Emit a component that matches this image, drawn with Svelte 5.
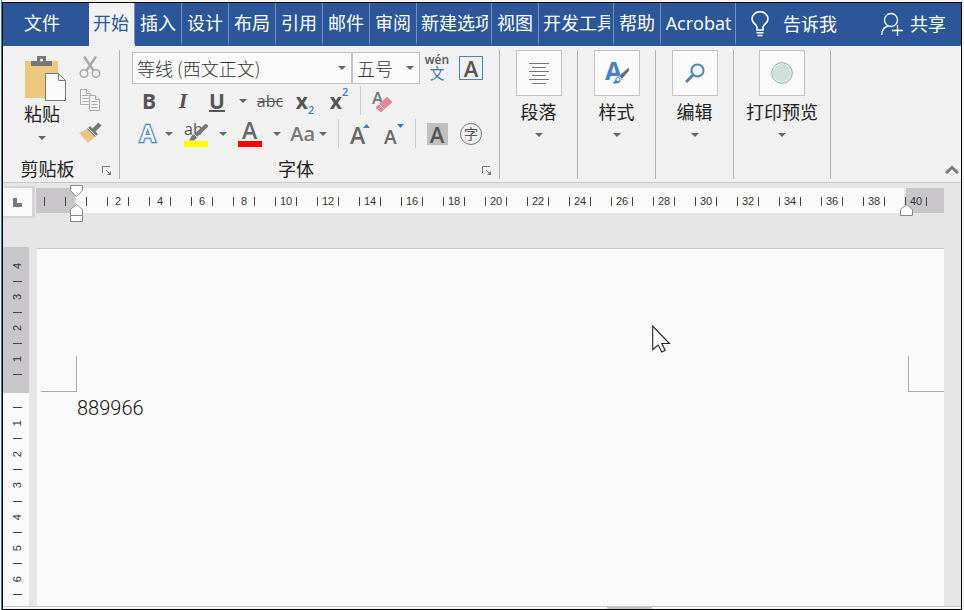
<script>
  const tabs = [
    { name: '插入' },
    { name: '设计' },
    { name: '布局' },
    { name: '引用' },
    { name: '邮件' },
    { name: '审阅' },
    { name: '新建选项', clipped: true },
    { name: '视图' },
    { name: '开发工具', clipped: true },
    { name: '帮助' },
    { name: 'Acrobat', clipped: true }
  ];

  // ruler numbers, null is the zero mark
  const columns = [null];
  for (let n = 2; n <= 40; n += 2) columns.push(n);

  const marginRows = [4, 3, 2, 1];
  const bodyRows = [1, 2, 3, 4, 5, 6];

  let fontName = '等线 (西文正文)';
  let fontSize = '五号';
</script>

{#snippet caret()}
  <svg class="caret" width="8" height="4" viewBox="0 0 8 4"><path d="M0 0h8L4 4z" fill="#666" /></svg>
{/snippet}

{#snippet launcher()}
  <svg width="10" height="10" viewBox="0 0 10 10" fill="none" stroke="#777">
    <path d="M.5 7V.5H8M4 4l4 4" />
    <path d="M9 5v4H5z" fill="#777" stroke="none" />
  </svg>
{/snippet}

<div class="frame">
  <div class="window">
    <nav class="tabs">
      <button class="tab file">文件</button>
      <button class="tab active">开始</button>
      {#each tabs as tab}
        <button class="tab" class:clipped={tab.clipped}><span>{tab.name}</span></button>
      {/each}
      <button class="tell">
        <svg width="18" height="26" viewBox="0 0 18 26" fill="none" stroke="#fff" stroke-width="1.6">
          <path d="M6 19v-3C5 13 1 12 1 8a8 7.300 0 0 1 16 0c0 4-4 5-5 8v3zM5.500 21.700h7M6.500 24.500h5" />
        </svg>
        <span>告诉我</span>
      </button>
      <button class="share">
        <svg width="22" height="24" viewBox="0 0 22 24" fill="none" stroke="#fff" stroke-width="1.300">
          <circle cx="10" cy="8" r="6.500" />
          <path d="M.7 23c.3-5 3-8.500 7-9M11 18.500h11M16.500 13v11" />
        </svg>
        <span>共享</span>
      </button>
    </nav>

    <div class="ribbon">
      <section class="group">
        <div class="clipboard">
          <button class="paste">
            <svg width="48" height="50" viewBox="0 0 48 50">
              <path d="M7 9h33v37H7z" fill="#edc87e" />
              <path d="M13 14V9h6V4h9v5h6v5z" fill="#777" />
              <circle cx="23.500" cy="8" r="1.500" fill="#f1f1f1" />
              <path d="M27.500 21.500h13l7 7v20h-20z" fill="#fafafa" stroke="#777" />
              <path d="M40.500 21.500v7h7" fill="none" stroke="#777" />
            </svg>
            <span>粘贴</span>
            {@render caret()}
          </button>
          <div class="side">
            <button aria-label="剪切">
              <svg width="22" height="24" viewBox="0 0 22 24" fill="none" stroke="#aaa">
                <path d="M5 1.500l9.500 14M17 1.500l-9.500 14" stroke-width="2.500" />
                <circle cx="5" cy="18.500" r="3.800" stroke-width="1.600" />
                <circle cx="17" cy="18.500" r="3.800" stroke-width="1.600" />
              </svg>
            </button>
            <button aria-label="复制">
              <svg width="22" height="24" viewBox="0 0 22 24" fill="#f4f4f4" stroke="#aaa">
                <path d="M1.500 1.500h6l4 4v11h-10z" />
                <path d="M7.500 1.500v4h4M3.500 7.500h6M3.500 10.500h6M3.500 13.500h6" />
                <path d="M10.500 7.500h6l4 4v11h-10z" />
                <path d="M16.500 7.500v4h4M12.500 13.500h6M12.500 16.500h6M12.500 19.500h6" />
              </svg>
            </button>
            <button aria-label="格式刷">
              <svg width="24" height="22" viewBox="0 0 24 22">
                <path d="M1 11l8-4 8 8-7 6z" fill="#edc38a" />
                <path d="M9 7l3-3 8 8-3 3z" fill="#777" />
                <path d="M14 10l8-8" stroke="#777" stroke-width="4.500" />
                <path d="M10 6l8 8" stroke="#f1f1f1" />
              </svg>
            </button>
          </div>
        </div>
        <footer>
          <span>剪贴板</span>
          <button aria-label="剪贴板选项">{@render launcher()}</button>
        </footer>
      </section>

      <section class="group">
        <div class="font">
          <div class="row pickers">
            <div class="picker name">
              <select aria-label="字体" bind:value={fontName}>
                <option>等线 (西文正文)</option>
                <option>宋体</option>
              </select>
              {@render caret()}
            </div>
            <div class="picker size">
              <select aria-label="字号" bind:value={fontSize}>
                <option>五号</option>
                <option>小四</option>
              </select>
              {@render caret()}
            </div>
            <button class="tool pinyin"><small>wén</small><span>文</span></button>
            <button class="tool"><span class="boxed">A</span></button>
          </div>
          <div class="row">
            <button class="tool bold">B</button>
            <button class="tool italic">I</button>
            <button class="tool underline">U</button>
            <button class="drop wide" aria-label="下划线样式">{@render caret()}</button>
            <button class="tool strike">abc</button>
            <button class="tool script">x<sub>2</sub></button>
            <button class="tool script">x<sup>2</sup></button>
            <i class="line"></i>
            <button class="tool" aria-label="清除格式">
              <svg width="22" height="24" viewBox="0 0 22 24">
                <text x="1" y="15" font-size="17" font-weight="600" fill="#777">A</text>
                <path d="M5 18L15 8.500q1-1 2 0l3.500 3.500q1 1 0 2L11 22.500q-1 1-2 0L5 19.500z" fill="#e8879c" />
                <path d="M8 15l6 6" stroke="#f1f1f1" />
              </svg>
            </button>
          </div>
          <div class="row">
            <button class="tool effect">
              <svg width="24" height="26" viewBox="0 0 24 26">
                <text x="4" y="21" font-size="23" font-weight="600" fill="#fff" stroke="#c5daf0" stroke-width="4">A</text>
                <text x="4" y="21" font-size="23" font-weight="600" fill="#fff" stroke="#3b7abf" stroke-width="2" paint-order="stroke">A</text>
              </svg>
            </button>
            <button class="drop" aria-label="文本效果">{@render caret()}</button>
            <button class="tool colour">
              <svg width="24" height="26" viewBox="0 0 24 26">
                <text x="0" y="14" font-size="16" fill="#555">ab</text>
                <path d="M0 20h24v6H0z" fill="#ff0" />
                <path d="M22 5L10 16" stroke="#777" stroke-width="4" stroke-linecap="round" />
                <path d="M9 13l4 4-3 2.500H5z" fill="#777" />
                <path d="M9.500 12.500l4 4" stroke="#f1f1f1" />
              </svg>
            </button>
            <button class="drop" aria-label="突出显示颜色">{@render caret()}</button>
            <button class="tool colour">
              <svg width="24" height="26" viewBox="0 0 24 26">
                <text x="4" y="18" font-size="23" font-weight="600" fill="#666">A</text>
                <path d="M0 20h24v6H0z" fill="#f00" />
              </svg>
            </button>
            <button class="drop" aria-label="字体颜色">{@render caret()}</button>
            <button class="tool case">Aa {@render caret()}</button>
            <i class="line after"></i>
            <button class="tool">
              <svg width="22" height="26" viewBox="0 0 22 26">
                <text x="1" y="23" font-size="23" font-weight="600" fill="#666">A</text>
                <path d="M14 7h7l-3.500-4z" fill="#3b7abf" />
              </svg>
            </button>
            <button class="tool">
              <svg width="22" height="26" viewBox="0 0 22 26">
                <text x="1" y="23" font-size="19" font-weight="600" fill="#666">A</text>
                <path d="M14 3h7l-3.500 4z" fill="#3b7abf" />
              </svg>
            </button>
            <i class="line"></i>
            <button class="tool"><span class="shaded">A</span></button>
            <button class="tool"><span class="circled">字</span></button>
          </div>
        </div>
        <footer>
          <span>字体</span>
          <button aria-label="字体选项">{@render launcher()}</button>
        </footer>
      </section>

      <section class="group">
        <button class="big">
          <span class="tile">
            <svg width="22" height="22" viewBox="0 0 22 22" stroke="#777">
              <path d="M1 1.500h20M4 5.500h14M1 9.500h20M4 13.500h14M1 17.500h20M4 21.500h14" />
            </svg>
          </span>
          <span>段落</span>
          {@render caret()}
        </button>
      </section>
      <section class="group">
        <button class="big">
          <span class="tile">
            <svg width="24" height="24" viewBox="0 0 24 24">
              <text x="0" y="19" font-size="25" font-weight="700" fill="#4a82bd">A</text>
              <path d="M24 6v4l-7 8-3-3z" fill="#666" stroke="#fafafa" stroke-width=".5" />
              <path d="M6 22q4-1 4-4c1-3 6-3 6 1 0 4-6 5-10 3z" fill="#4a82bd" stroke="#fafafa" />
              <circle cx="13" cy="18.500" r="1.500" fill="#fafafa" />
            </svg>
          </span>
          <span>样式</span>
          {@render caret()}
        </button>
      </section>
      <section class="group">
        <button class="big">
          <span class="tile">
            <svg width="20" height="20" viewBox="0 0 20 20" fill="none" stroke="#4a82bd">
              <circle cx="12.500" cy="7.500" r="6" stroke-width="2" />
              <path d="M8 12l-7 7" stroke-width="3" />
            </svg>
          </span>
          <span>编辑</span>
          {@render caret()}
        </button>
      </section>
      <section class="group">
        <button class="big">
          <span class="tile">
            <svg width="22" height="22" viewBox="0 0 22 22">
              <circle cx="11" cy="11" r="10.300" fill="#fafafa" stroke="#7fae9b" />
              <circle cx="11" cy="11" r="9" fill="#cfe0da" />
            </svg>
          </span>
          <span>打印预览</span>
          {@render caret()}
        </button>
      </section>
      <button class="collapse" aria-label="折叠功能区">
        <svg width="14" height="9" viewBox="0 0 14 9" fill="none" stroke="#777" stroke-width="3">
          <path d="M1 8l6-5.500L13 8" />
        </svg>
      </button>
    </div>

    <div class="rulerbar">
      <button class="tabstop" aria-label="制表符">
        <svg width="9" height="9" viewBox="0 0 9 9"><path d="M0 0h4v5h5v4H0z" fill="#777" /></svg>
      </button>
      <div class="ruler">
        <div class="cell first"><b></b></div>
        {#each columns as n}
          <div class="cell"><b></b><span>{n ?? ''}</span><b></b></div>
        {/each}
        <svg class="indent" width="13" height="37" viewBox="0 0 13 37" fill="#fff" stroke="#888">
          <path d="M.5.500h12v5l-6 6-6-6zM.500 36.500v-12l6-5 6 5v12zM.500 30.500h12" />
        </svg>
        <svg class="indent right" width="13" height="12" viewBox="0 0 13 12" fill="#fff" stroke="#888">
          <path d="M.5 11.500v-6l6-5 6 5v6z" />
        </svg>
      </div>
    </div>

    <div class="workspace">
      <div class="vruler">
        <div class="rows margin">
          {#each marginRows as n}
            <div class="mark"><span>{n}</span><b></b></div>
          {/each}
        </div>
        <div class="rows body">
          <b></b>
          {#each bodyRows as n}
            <div class="mark"><span>{n}</span><b></b></div>
          {/each}
        </div>
      </div>
      <main class="page">
        <div class="corners"><i></i><i></i></div>
        <div class="text" contenteditable="true" role="textbox" aria-label="文档" tabindex="0">889966</div>
        <svg class="pointer" width="19" height="28" viewBox="0 0 19 28">
          <path d="M.7 1v23.500l5.500-4.500 3.500 7 3.500-1.500-3.300-7h7.500z" fill="#fff" stroke="#223" stroke-width="1.100" />
        </svg>
      </main>
    </div>

    <div class="scrollbar"><i></i></div>
  </div>
</div>

<style>
  :global(body) {
    margin: 0;
    background: #f6f6f6;
  }
  .frame {
    box-sizing: border-box;
    min-height: 100vh;
    display: flex;
    padding: 2px 2px 0 0;
    margin-left: 1px;
    border-left: 1px solid #2f7fc1;
    font: 18px/24px "Open Sans", "Noto Sans CJK SC", sans-serif;
    color: #222;
  }
  .window {
    flex: 1;
    min-width: 0;
    display: flex;
    flex-direction: column;
    border: 1px solid #000;
    background: #e6e6e6;
  }
  button {
    padding: 0;
    border: 0;
    background: none;
    font: inherit;
    color: inherit;
    white-space: nowrap;
  }
  svg {
    display: block;
    flex: none;
  }

  .tabs {
    display: flex;
    height: 43px;
    background: #2b579a;
    color: #fff;
  }
  .tab {
    box-sizing: border-box;
    padding: 0 5px 4px;
  }
  .tab:not(.file) {
    border-right: 1px solid #6f94c4;
    border-bottom: 4px solid #2b579a;
    padding-bottom: 0;
  }
  .tab span {
    display: block;
    overflow: hidden;
  }
  .tab.file {
    width: 86px;
    padding-right: 13px;
  }
  .tab.tab.active {
    background: #f1f1f1;
    border-bottom-color: #f1f1f1;
    color: #2b579a;
    padding: 0 5px 0 4px;
  }
  .tab.clipped {
    width: 75px;
    padding: 0 3px 0 4px;
  }
  .tell,
  .share {
    display: flex;
    align-items: center;
    padding-bottom: 2px;
  }
  .tell {
    gap: 14px;
    margin-left: 15px;
  }
  .share {
    gap: 7px;
    margin: 0 15px 0 auto;
  }

  .ribbon {
    display: flex;
    padding: 4px 0 3px;
    border-bottom: 1px solid #c8c8c8;
    background: #f1f1f1;
  }
  .group {
    box-sizing: border-box;
    min-width: 78px;
    min-height: 129px;
    display: flex;
    flex-direction: column;
    border-right: 1px solid #b4b4b4;
  }
  footer {
    display: flex;
    align-items: flex-end;
    margin-top: auto;
    padding-right: 7px;
    line-height: 20px;
  }
  footer span {
    flex: 1;
    padding-right: 10px;
    text-align: center;
  }
  footer button {
    padding-bottom: 3px;
  }
  .clipboard {
    display: flex;
    padding: 0 17px 0 15px;
    gap: 12px;
  }
  .paste {
    display: flex;
    flex-direction: column;
    align-items: center;
    padding-top: 2px;
  }
  .paste .caret {
    margin-top: 10px;
  }
  .side button {
    display: flex;
    align-items: center;
    justify-content: center;
    width: 24px;
    height: 33px;
  }

  .font {
    padding: 0 11px 0 12px;
  }
  .font text {
    font-family: "Open Sans", sans-serif;
  }
  .row {
    display: flex;
    align-items: center;
    height: 33px;
    color: #555;
  }
  .pickers {
    padding-top: 1px;
  }
  .picker {
    box-sizing: border-box;
    display: flex;
    align-items: center;
    height: 32px;
    padding-right: 5px;
    border: 1px solid #c4c4c4;
    background: #fafafa;
  }
  .picker select {
    flex: 1;
    min-width: 0;
    padding: 0 0 0 4px;
    border: 0;
    background: none;
    appearance: none;
    font: 300 18px/24px "Noto Sans CJK SC", sans-serif;
    color: #333;
  }
  .picker.name {
    width: 220px;
  }
  .picker.size {
    width: 68px;
  }
  .tool {
    display: flex;
    align-items: center;
    justify-content: center;
    width: 34px;
    height: 30px;
  }
  .pinyin {
    flex-direction: column;
    color: #3b7abf;
    font-size: 15px;
    line-height: 16px;
  }
  .pinyin small {
    font-size: 12px;
    font-weight: 600;
    line-height: 10px;
    color: #555;
  }
  .boxed,
  .shaded {
    box-sizing: border-box;
    width: 24px;
    border: 1px solid #4a82bd;
    font-size: 22px;
    font-weight: 600;
    line-height: 22px;
  }
  .shaded {
    width: 21px;
    border: 0;
    background: #c0c0c0;
  }
  .circled {
    width: 20px;
    border: 1px solid #777;
    border-radius: 50%;
    font-size: 14px;
    line-height: 20px;
  }
  .bold,
  .underline {
    font-size: 21px;
    font-weight: 700;
  }
  .underline {
    text-decoration: underline;
    text-decoration-thickness: 2px;
  }
  .italic {
    font: italic bold 22px "Liberation Serif", serif;
  }
  .strike {
    width: 36px;
    font-size: 16px;
    text-decoration: line-through;
  }
  .script {
    font-size: 21px;
    font-weight: 700;
  }
  .script sub,
  .script sup {
    align-self: flex-end;
    font-size: 11px;
    line-height: 12px;
    font-weight: 600;
    color: #3b7abf;
  }
  .script sup {
    align-self: flex-start;
  }
  .drop {
    display: flex;
    justify-content: center;
    width: 10px;
  }
  .drop.wide {
    width: 18px;
  }
  .effect {
    width: 32px;
  }
  .colour {
    width: 44px;
  }
  .case {
    justify-content: flex-end;
    gap: 4px;
    width: 48px;
    padding-right: 3px;
    font-size: 20px;
    font-weight: 600;
    color: #777;
  }
  .line {
    width: 1px;
    height: 29px;
    margin: 0 4px;
    background: #ccc;
  }
  .line.after {
    margin-left: 8px;
  }

  .big {
    display: flex;
    flex-direction: column;
    align-items: center;
    padding: 0 12px;
  }
  .tile {
    box-sizing: border-box;
    display: flex;
    align-items: center;
    justify-content: center;
    width: 46px;
    height: 46px;
    margin-bottom: 4px;
    border: 1px solid #c4c4c4;
    background: #fafafa;
  }
  .tile text {
    font-family: "Open Sans", sans-serif;
  }
  .big .caret {
    margin-top: 9px;
  }
  .collapse {
    align-self: flex-end;
    margin: 0 2px 5px auto;
  }

  .rulerbar {
    display: flex;
    align-items: flex-start;
    padding: 3px 17px 29px 0;
  }
  .tabstop {
    display: flex;
    align-items: center;
    justify-content: center;
    box-sizing: border-box;
    width: 32px;
    height: 32px;
    margin-right: 1px;
    border: solid #d4d4d4;
    border-width: 2px 3px 2px 0;
    background: #fafafa;
  }
  .ruler {
    position: relative;
    flex: 1;
    display: flex;
    height: 25px;
    margin-top: 2px;
    background: linear-gradient(to right, #c8c6c8 39px, #e6e6e6 39px 41px, #fafafa 41px 868px, #e6e6e6 868px 870px, #c8c6c8 870px);
    font: 11px/25px "Liberation Sans", sans-serif;
    color: #333;
  }
  .cell {
    box-sizing: border-box;
    flex: none;
    display: flex;
    align-items: center;
    justify-content: space-between;
    width: 42px;
    padding: 2px 10px 0;
  }
  .cell.first {
    width: 19px;
    padding-left: 8px;
  }
  .cell b {
    width: 1px;
    height: 9px;
    background: #444;
  }
  .indent {
    position: absolute;
    left: 34px;
    top: -3px;
  }
  .indent.right {
    left: 864px;
    top: 16px;
  }

  .workspace {
    flex: 1;
    display: flex;
    gap: 8px;
    padding-right: 17px;
  }
  .vruler {
    width: 26px;
    display: flex;
    flex-direction: column;
    font: 11px/11px "Liberation Sans", sans-serif;
    color: #333;
  }
  .rows {
    display: flex;
    flex-direction: column;
  }
  .rows.margin {
    padding: 4px 0 18px;
    background: #c8c6c8;
  }
  .rows.body {
    flex: 1;
    padding: 14px 0 11px;
    background: #fafafa;
  }
  .mark {
    flex: 1 0 31px;
    display: flex;
    flex-direction: column;
    align-items: center;
    padding-left: 3px;
  }
  .mark span {
    flex: 1;
    writing-mode: vertical-rl;
    transform: rotate(180deg);
    text-align: center;
  }
  .rows b {
    width: 9px;
    height: 1px;
    background: #444;
  }
  .body > b {
    margin-left: 10px;
  }
  .page {
    position: relative;
    flex: 1;
    margin-top: 1px;
    padding-top: 107px;
    border-top: 1px solid #c6c6c6;
    background: #fafafa;
  }
  .corners {
    display: flex;
    justify-content: space-between;
    padding-left: 4px;
  }
  .corners i {
    box-sizing: border-box;
    width: 36px;
    height: 36px;
    border: solid #aaa;
    border-width: 0 1px 1px 0;
  }
  .corners i:last-child {
    border-width: 0 0 1px 1px;
  }
  .text {
    margin: 4px 40px 0;
    font: 300 20px/24px Roboto, "Noto Sans CJK SC", sans-serif;
    color: #111;
    outline: none;
  }
  .pointer {
    position: absolute;
    left: 615px;
    top: 76px;
  }
  .scrollbar {
    display: flex;
    height: 2px;
    border-top: 1px solid #c6c6c6;
    background: #fafafa;
  }
  .scrollbar i {
    width: 45px;
    margin-left: 63%;
    background: #c1c1c1;
  }
</style>
